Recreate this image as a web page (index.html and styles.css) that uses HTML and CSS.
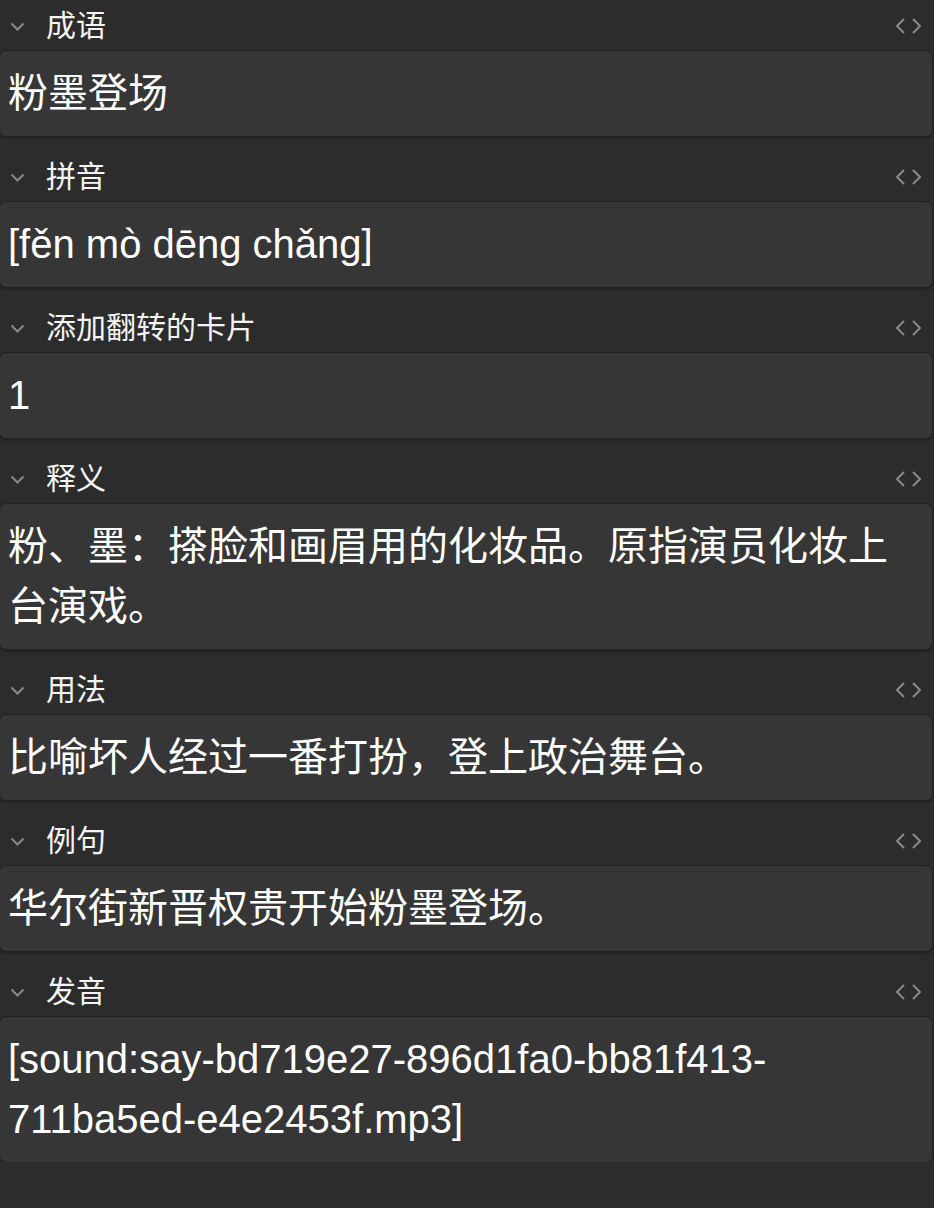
FILE: index.html
```html
<!DOCTYPE html>
<html lang="zh-CN">
<head>
  <meta charset="UTF-8">
  <title>Editor</title>
  <link rel="stylesheet" href="styles.css">
</head>
<body>
  <div class="fields">
    <!-- 成语 -->
    <div class="field-group">
      <div class="label-row">
        <svg class="chevron" width="15" height="9" viewBox="0 0 15 9"><path d="M1.5 1.5 L7.5 7.5 L13.5 1.5" /></svg>
        <span class="label-name">成语</span>
        <svg class="code-toggle" width="28" height="16" viewBox="0 0 28 16"><path d="M9 1 L2 8 L9 15" /><path d="M18 1 L25 8 L18 15" /></svg>
      </div>
      <div class="field-box">粉墨登场</div>
    </div>

    <!-- 拼音 -->
    <div class="field-group">
      <div class="label-row">
        <svg class="chevron" width="15" height="9" viewBox="0 0 15 9"><path d="M1.5 1.5 L7.5 7.5 L13.5 1.5" /></svg>
        <span class="label-name">拼音</span>
        <svg class="code-toggle" width="28" height="16" viewBox="0 0 28 16"><path d="M9 1 L2 8 L9 15" /><path d="M18 1 L25 8 L18 15" /></svg>
      </div>
      <div class="field-box">[fěn mò dēng chǎng]</div>
    </div>

    <!-- 添加翻转的卡片 -->
    <div class="field-group">
      <div class="label-row">
        <svg class="chevron" width="15" height="9" viewBox="0 0 15 9"><path d="M1.5 1.5 L7.5 7.5 L13.5 1.5" /></svg>
        <span class="label-name">添加翻转的卡片</span>
        <svg class="code-toggle" width="28" height="16" viewBox="0 0 28 16"><path d="M9 1 L2 8 L9 15" /><path d="M18 1 L25 8 L18 15" /></svg>
      </div>
      <div class="field-box">1</div>
    </div>

    <!-- 释义 -->
    <div class="field-group">
      <div class="label-row">
        <svg class="chevron" width="15" height="9" viewBox="0 0 15 9"><path d="M1.5 1.5 L7.5 7.5 L13.5 1.5" /></svg>
        <span class="label-name">释义</span>
        <svg class="code-toggle" width="28" height="16" viewBox="0 0 28 16"><path d="M9 1 L2 8 L9 15" /><path d="M18 1 L25 8 L18 15" /></svg>
      </div>
      <div class="field-box">粉、墨：搽脸和画眉用的化妆品。原指演员化妆上台演戏。</div>
    </div>

    <!-- 用法 -->
    <div class="field-group">
      <div class="label-row">
        <svg class="chevron" width="15" height="9" viewBox="0 0 15 9"><path d="M1.5 1.5 L7.5 7.5 L13.5 1.5" /></svg>
        <span class="label-name">用法</span>
        <svg class="code-toggle" width="28" height="16" viewBox="0 0 28 16"><path d="M9 1 L2 8 L9 15" /><path d="M18 1 L25 8 L18 15" /></svg>
      </div>
      <div class="field-box">比喻坏人经过一番打扮，登上政治舞台。</div>
    </div>

    <!-- 例句 -->
    <div class="field-group">
      <div class="label-row">
        <svg class="chevron" width="15" height="9" viewBox="0 0 15 9"><path d="M1.5 1.5 L7.5 7.5 L13.5 1.5" /></svg>
        <span class="label-name">例句</span>
        <svg class="code-toggle" width="28" height="16" viewBox="0 0 28 16"><path d="M9 1 L2 8 L9 15" /><path d="M18 1 L25 8 L18 15" /></svg>
      </div>
      <div class="field-box">华尔街新晋权贵开始粉墨登场。</div>
    </div>

    <!-- 发音 -->
    <div class="field-group">
      <div class="label-row">
        <svg class="chevron" width="15" height="9" viewBox="0 0 15 9"><path d="M1.5 1.5 L7.5 7.5 L13.5 1.5" /></svg>
        <span class="label-name">发音</span>
        <svg class="code-toggle" width="28" height="16" viewBox="0 0 28 16"><path d="M9 1 L2 8 L9 15" /><path d="M18 1 L25 8 L18 15" /></svg>
      </div>
      <div class="field-box">[sound:say-bd719e27-896d1fa0-bb81f413-<wbr>711ba5ed-e4e2453f.mp3]</div>
    </div>
  </div>
</body>
</html>
```

FILE: styles.css
```css
/* Page */
body {
  margin: 0;
  padding: 0;
  background-color: #2c2c2c;
  color: #fff;
  font-family: "Liberation Sans", "Noto Sans CJK SC", sans-serif;
}

.fields {
  display: flex;
  flex-direction: column;
  gap: 15px;
  padding-right: 2px;
}

/* Label row above each field */
.label-row {
  height: 51px;
  display: flex;
  align-items: center;
  padding: 0 10px;
}

.label-name {
  margin-left: 21px;
  font-size: 30px;
  line-height: 1;
  color: #f4f4f4;
  flex: 1;
}

.chevron path,
.code-toggle path {
  fill: none;
  stroke: #8a8a8a;
  stroke-width: 2;
}

.chevron {
  margin-top: 2px;
}

.code-toggle {
  margin-right: -1px;
}

/* Editable field */
.field-box {
  background-color: #363636;
  border-radius: 6px;
  padding: 12px 8px 13px;
  font-size: 40px;
  line-height: 60px;
  color: #fff;
  box-shadow: 0 0 0 1px #222, 0 2px 3px rgba(0, 0, 0, 0.35);
}
```
